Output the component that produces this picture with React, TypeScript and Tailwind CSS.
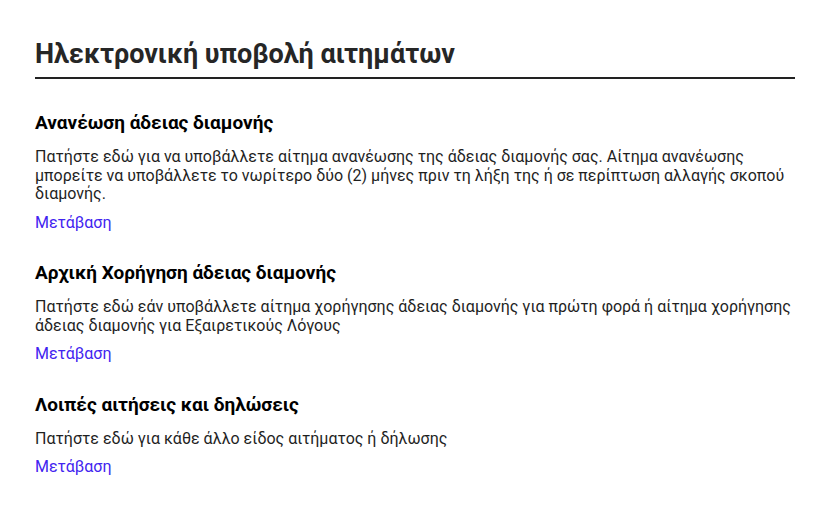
import React from 'react';

interface Service {
  title: string;
  text: string;
}

const services: Service[] = [
  {
    title: 'Ανανέωση άδειας διαμονής',
    text: 'Πατήστε εδώ για να υποβάλλετε αίτημα ανανέωσης της άδειας διαμονής σας. Αίτημα ανανέωσης μπορείτε να υποβάλλετε το νωρίτερο δύο (2) μήνες πριν τη λήξη της ή σε περίπτωση αλλαγής σκοπού διαμονής.',
  },
  {
    title: 'Αρχική Χορήγηση άδειας διαμονής',
    text: 'Πατήστε εδώ εάν υποβάλλετε αίτημα χορήγησης άδειας διαμονής για πρώτη φορά ή αίτημα χορήγησης άδειας διαμονής για Εξαιρετικούς Λόγους',
  },
  {
    title: 'Λοιπές αιτήσεις και δηλώσεις',
    text: 'Πατήστε εδώ για κάθε άλλο είδος αιτήματος ή δήλωσης',
  },
];

export default function App() {
  return (
    <div className="min-h-screen bg-white font-['Roboto','Noto_Sans',sans-serif] text-[#1f1f1f]">
      <div className="ml-[35px] w-[760px] pt-[38px]">
        <h1 className="border-b-2 border-[#222] pb-[7px] text-[27px] font-bold leading-[32px] text-[#262626]">
          Ηλεκτρονική υποβολή αιτημάτων
        </h1>
        <div className="flex flex-col gap-[30.5px] pt-[33px]">
          {services.map((s) => (
            <section key={s.title}>
              <h2 className="text-[19px] font-bold leading-[22px] text-black">{s.title}</h2>
              <p className="mt-[14px] text-[16px] leading-[18.5px]">{s.text}</p>
              <a href="#" className="mt-[10px] block text-[16px] leading-[18px] text-[#4224f0]">
                Μετάβαση
              </a>
            </section>
          ))}
        </div>
      </div>
    </div>
  );
}
